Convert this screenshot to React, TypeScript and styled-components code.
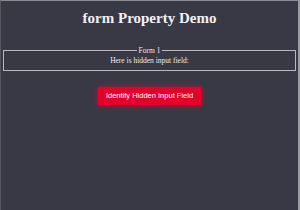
import React from "react";
import styled, { createGlobalStyle } from "styled-components";

const Global = createGlobalStyle`
  html, body { margin: 0; padding: 0; background: #393845; }
  body { width: 300px; height: 210px; overflow: hidden; }
`;

const Frame = styled.div`
  box-sizing: border-box;
  width: 300px;
  height: 210px;
  background: #393845;
  border-top: 1px solid #8a8a92;
  border-left: 1px solid #55545f;
  border-right: 2px solid #9a9aa2;
  padding: 8px 2px 0 2px;
  font-family: "Liberation Serif", "Times New Roman", serif;
  color: #ffffff;
  text-align: center;
`;

const Title = styled.h1`
  margin: 0;
  font-size: 15px;
  font-weight: bold;
  line-height: 18px;
  color: #f2f2f4;
`;

const Fields = styled.fieldset`
  margin: 19px 0 0 0;
  padding: 1px 4px 5px;
  border: 1px solid #b8b8bf;
  font-size: 7.5px;
  line-height: 9px;
  color: #ececf0;
`;

const Legend = styled.legend`
  padding: 0 2px;
  margin: 0 auto;
  font-size: 7.5px;
`;

const Note = styled.p`
  margin: 0;
`;

const Button = styled.button`
  margin-top: 16px;
  padding: 4px 8px 5px;
  background: #e3002b;
  color: #ffffff;
  border: none;
  border-radius: 1px;
  font-family: "Liberation Sans", Arial, sans-serif;
  font-size: 7.5px;
  line-height: 9px;
  box-shadow: 0 0 4px 1px rgba(230, 0, 45, 0.65);
`;

export default function App() {
  return (
    <>
      <Global />
      <Frame>
        <Title>form Property Demo</Title>
        <Fields>
          <Legend>Form 1</Legend>
          <Note>Here is hidden input field:</Note>
          <input type="hidden" />
        </Fields>
        <Button>Identify Hidden Input Field</Button>
      </Frame>
    </>
  );
}
